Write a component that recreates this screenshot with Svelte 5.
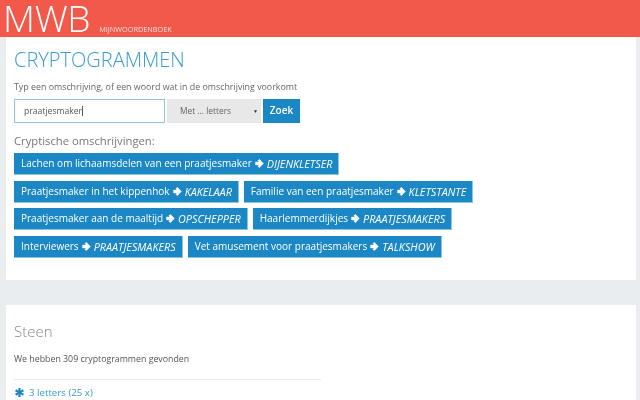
<script>
  const rows = [
    [["Lachen om lichaamsdelen van een praatjesmaker", "DIJENKLETSER"]],
    [["Praatjesmaker in het kippenhok", "KAKELAAR"], ["Familie van een praatjesmaker", "KLETSTANTE"]],
    [["Praatjesmaker aan de maaltijd", "OPSCHEPPER"], ["Haarlemmerdijkjes", "PRAATJESMAKERS"]],
    [["Interviewers", "PRAATJESMAKERS"], ["Vet amusement voor praatjesmakers", "TALKSHOW"]]
  ];
</script>

<div class="page">
  <header class="top">
    <span class="logo">MWB</span>
    <span class="sub">MIJNWOORDENBOEK</span>
  </header>
  <div class="wrap">
    <section class="card first">
      <h1>CRYPTOGRAMMEN</h1>
      <p class="hint">Typ een omschrijving, of een woord wat in de omschrijving voorkomt</p>
      <div class="form">
        <div class="input">praatjesmaker<i class="caret"></i></div>
        <div class="select"><span>Met ... letters</span><b>▼</b></div>
        <div class="zoek">Zoek</div>
      </div>
      <h2>Cryptische omschrijvingen:</h2>
      <div class="rows">
        {#each rows as row}
          <div class="row">
            {#each row as [text, answer]}
              <a class="btn">
                <span>{text}</span>
                <svg viewBox="0 0 10 10" width="9" height="9" aria-hidden="true"><path d="M0.6 3.4H4.6L3.2 2 4.8 0.4 9.4 5 4.8 9.6 3.2 8 4.6 6.6H0.6z" fill="#fff" stroke="#fff" stroke-width="0.5" stroke-linejoin="round"/></svg>
                <em>{answer}</em>
              </a>
            {/each}
          </div>
        {/each}
      </div>
    </section>
    <section class="card second">
      <h3>Steen</h3>
      <p class="found">We hebben 309 cryptogrammen gevonden</p>
      <hr />
      <div class="link">
        <svg viewBox="0 0 10 10" width="9" height="9" aria-hidden="true"><path d="M3.7 0h2.6l-.2 3 2.6-1.6 1.3 2.2L7.2 5l2.8 1.4-1.3 2.2L6.1 7l.2 3H3.7l.2-3-2.6 1.6L0 6.4 2.8 5 0 3.6l1.3-2.2L3.9 3z" fill="#1b87c4"/></svg>
        <span>3 letters (25 x)</span>
      </div>
    </section>
  </div>
</div>

<style>
  :global(body) {
    margin: 0;
    background: #e9edf0;
    overflow: hidden;
  }
  .page {
    width: 640px;
    height: 400px;
    overflow: hidden;
    font-family: "Open Sans", sans-serif;
    filter: blur(0.45px);
  }
  .top {
    height: 37px;
    background: #f2594b;
    display: flex;
    align-items: flex-end;
    overflow: hidden;
    color: #fff;
  }
  .logo {
    align-self: flex-start;
    font-size: 37px;
    line-height: 35px;
    font-weight: 300;
    margin-left: 3px;
    letter-spacing: -0.3px;
  }
  .sub {
    font-size: 7.3px;
    margin-left: 9px;
    margin-bottom: 3px;
    opacity: 0.8;
  }
  .wrap {
    margin: 0 4px 0 6px;
  }
  .card {
    background: #fff;
    padding: 0 8px;
  }
  .first {
    height: 243px;
    margin-bottom: 25px;
  }
  .second {
    height: 95px;
    overflow: hidden;
  }
  h1 {
    margin: 0;
    padding-top: 10px;
    font-size: 20px;
    line-height: 26px;
    font-weight: 300;
    color: #3d9bd0;
  }
  .hint {
    margin: 8px 0 0;
    font-size: 8.85px;
    line-height: 12px;
    color: #666;
  }
  .form {
    display: flex;
    margin-top: 6px;
    height: 24px;
  }
  .input {
    box-sizing: border-box;
    width: 151px;
    border: 1px solid #8fc7e6;
    font-size: 8.6px;
    line-height: 22px;
    padding-left: 9px;
    color: #555;
  }
  .caret {
    display: inline-block;
    width: 1px;
    height: 10px;
    background: #555;
    vertical-align: -2px;
  }
  .select {
    box-sizing: border-box;
    width: 94px;
    margin-left: 2px;
    background: #e8e8e8;
    font-size: 8.4px;
    line-height: 24px;
    color: #666;
    padding-left: 13px;
    padding-right: 3px;
    display: flex;
    justify-content: space-between;
  }
  .select b {
    font-size: 5px;
    font-weight: 400;
    color: #333;
  }
  .zoek {
    width: 37px;
    margin-left: 2px;
    background: #1b87c4;
    color: #fff;
    font-size: 10px;
    font-weight: 600;
    line-height: 23px;
    text-align: center;
  }
  h2 {
    margin: 10px 0 0;
    font-size: 11.25px;
    line-height: 16px;
    font-weight: 400;
    color: #777;
  }
  .rows {
    margin-top: 4px;
    display: flex;
    flex-direction: column;
    gap: 5.6px;
  }
  .row {
    display: flex;
    gap: 5px;
  }
  .btn {
    box-sizing: border-box;
    height: 22px;
    background: #1b87c4;
    border: 1px solid #8cc4e4;
    border-width: 0 1px 1px 0;
    color: #fff;
    font-size: 10.03px;
    line-height: 21px;
    padding: 0 6px 0 7px;
    display: flex;
    align-items: center;
    gap: 3px;
    white-space: nowrap;
  }
  .btn em {
    font-style: italic;
    font-size: 10.8px;
  }
  h3 {
    margin: 0;
    padding-top: 16px;
    font-size: 15px;
    line-height: 20px;
    font-weight: 300;
    color: #888;
  }
  .found {
    margin: 12px 0 0;
    font-size: 8.8px;
    line-height: 12px;
    color: #555;
  }
  hr {
    margin: 14px 0 0;
    width: 307px;
    border: 0;
    border-top: 1px solid #e9edf0;
  }
  .link {
    margin-top: 6px;
    display: flex;
    align-items: center;
    gap: 5px;
    font-size: 9.7px;
    line-height: 13px;
    color: #3d9bd0;
  }
  .link svg {
    margin-left: 1px;
  }
</style>
